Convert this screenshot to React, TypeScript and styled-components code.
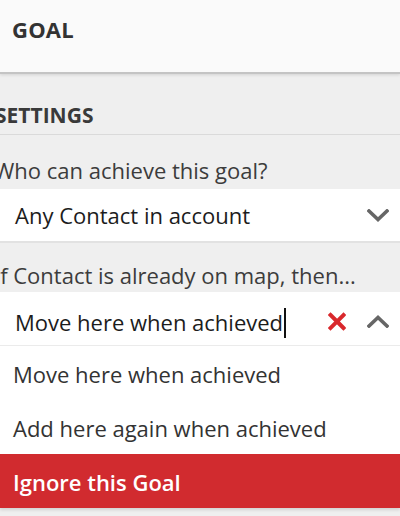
import React from 'react';
import styled, { createGlobalStyle } from 'styled-components';

const GlobalStyle = createGlobalStyle`
  html, body {
    margin: 0;
    padding: 0;
    background: #efefef;
    overflow: hidden;
  }
  body {
    font-family: "Open Sans", "Liberation Sans", sans-serif;
  }
`;

const Page = styled.div`
  width: 400px;
  height: 516px;
  background: #efefef;
  overflow: hidden;
`;

const Header = styled.header`
  height: 58px;
  padding: 14px 0 0 12px;
  background: #fafafa;
  border-bottom: 2px solid #c4c4c4;
  box-shadow: 0 1px 3px rgba(0, 0, 0, 0.12);
`;

const Title = styled.h1`
  margin: 0;
  font-size: 22px;
  line-height: 30px;
  font-weight: 700;
  color: #333;
  letter-spacing: 0.2px;
`;

const SectionHead = styled.div`
  padding: 26px 0 4px;
  border-bottom: 1px solid #dadada;
`;

const SectionTitle = styled.h2`
  margin: 0 0 0 -5px;
  font-size: 21px;
  line-height: 30px;
  font-weight: 700;
  color: #3a3a3a;
`;

const Label = styled.div<{ $top: number }>`
  padding-top: ${(p) => p.$top}px;
  margin-left: -6px;
  font-size: 22px;
  line-height: 30px;
  color: #3c3c3c;
  white-space: nowrap;
`;

const Select = styled.div<{ $top: number; $height: number; $open?: boolean }>`
  margin-top: ${(p) => p.$top}px;
  height: ${(p) => p.$height}px;
  box-sizing: border-box;
  display: flex;
  align-items: flex-start;
  padding: ${(p) => (p.$open ? 15 : 11)}px 11px 0 15px;
  background: #fff;
  border-bottom: ${(p) => (p.$open ? '1px solid #ececec' : '2px solid #e2e2e2')};
`;

const Value = styled.div`
  flex: 1;
  font-size: 22px;
  line-height: 30px;
  color: #1c1c1c;
  white-space: nowrap;
`;

const Caret = styled.span`
  display: inline-block;
  width: 2px;
  height: 30px;
  margin-left: 1px;
  vertical-align: -7px;
  background: #111;
`;

const Icons = styled.div<{ $open?: boolean }>`
  display: flex;
  align-items: center;
  gap: 21px;
  height: ${(p) => (p.$open ? 22 : 30)}px;
  margin-top: ${(p) => (p.$open ? 3 : 0)}px;
`;

const Menu = styled.ul`
  margin: 0;
  padding: 0;
  list-style: none;
  background: #fff;
  box-shadow: 0 2px 3px rgba(0, 0, 0, 0.12);
`;

const Option = styled.li<{ $active?: boolean }>`
  height: 54px;
  box-sizing: border-box;
  padding: 13px 0 0 13px;
  font-size: 22px;
  line-height: 30px;
  white-space: nowrap;
  color: ${(p) => (p.$active ? '#fff' : '#333')};
  font-weight: ${(p) => (p.$active ? 600 : 400)};
  background: ${(p) => (p.$active ? '#d12b2f' : '#fff')};
`;

const ChevronDown = () => (
  <svg width="22" height="13" viewBox="0 0 22 13">
    <polyline points="2,2 11,10.5 20,2" fill="none" stroke="#666" strokeWidth="3.6" strokeLinecap="square" />
  </svg>
);

const ChevronUp = () => (
  <svg width="22" height="13" viewBox="0 0 22 13">
    <polyline points="2,11 11,2.5 20,11" fill="none" stroke="#666" strokeWidth="3.6" strokeLinecap="square" />
  </svg>
);

const Clear = () => (
  <svg width="18" height="19" viewBox="0 0 18 19">
    <path d="M2.5 3 L15.5 16 M15.5 3 L2.5 16" stroke="#d9282c" strokeWidth="4" strokeLinecap="square" />
  </svg>
);

export default function App() {
  return (
    <Page>
      <GlobalStyle />
      <Header>
        <Title>GOAL</Title>
      </Header>
      <SectionHead>
        <SectionTitle>SETTINGS</SectionTitle>
      </SectionHead>

      <Label $top={20}>Who can achieve this goal?</Label>
      <Select $top={4} $height={54}>
        <Value>Any Contact in account</Value>
        <Icons>
          <ChevronDown />
        </Icons>
      </Select>

      <Label $top={17}>If Contact is already on map, then...</Label>
      <Select $top={2} $height={54} $open>
        <Value>
          Move here when achieved
          <Caret />
        </Value>
        <Icons $open>
          <Clear />
          <ChevronUp />
        </Icons>
      </Select>
      <Menu>
        <Option>Move here when achieved</Option>
        <Option>Add here again when achieved</Option>
        <Option $active>Ignore this Goal</Option>
      </Menu>
    </Page>
  );
}
